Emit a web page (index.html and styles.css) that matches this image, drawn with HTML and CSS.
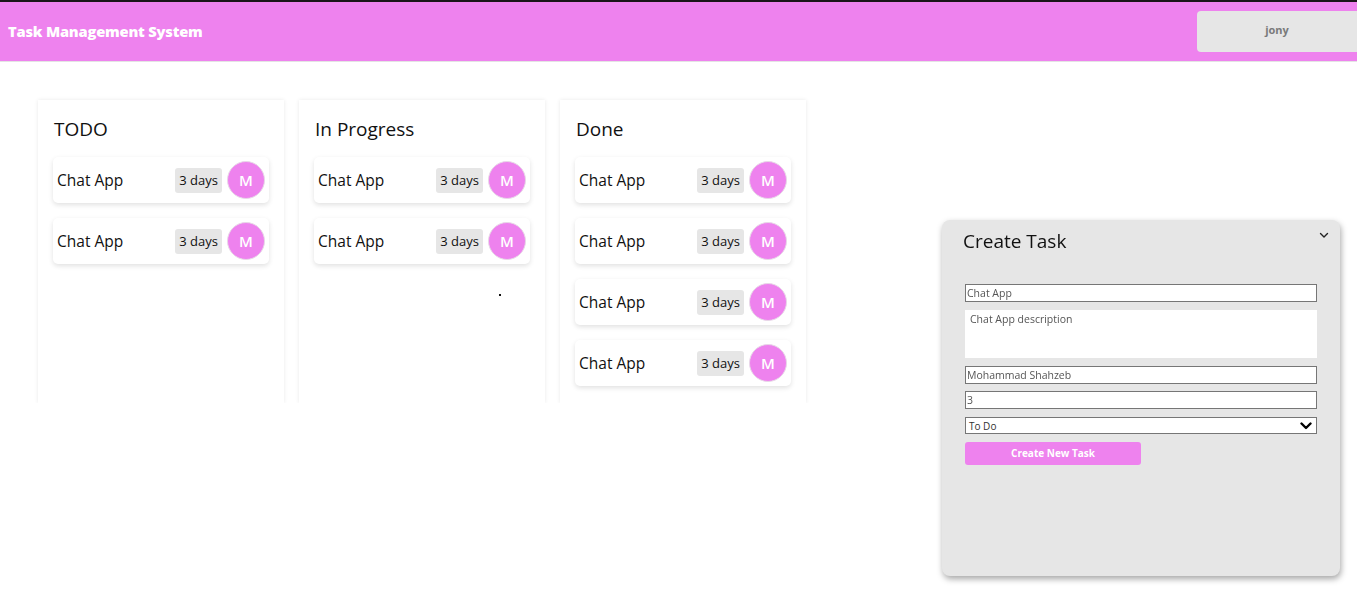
FILE: index.html
```html
<!DOCTYPE html>
<html>
<head>
<meta charset="utf-8">
<link rel="stylesheet" href="styles.css">
</head>
<body>
<header class="topbar">
  <h1 class="brand">Task Management System</h1>
  <div class="user">jony</div>
</header>
<main class="board">
  <section class="column">
    <h2 class="column-title">TODO</h2>
    <div class="card"><span class="card-name">Chat App</span><span class="days">3 days</span><span class="avatar">M</span></div>
    <div class="card"><span class="card-name">Chat App</span><span class="days">3 days</span><span class="avatar">M</span></div>
  </section>
  <section class="column">
    <h2 class="column-title">In Progress</h2>
    <div class="card"><span class="card-name">Chat App</span><span class="days">3 days</span><span class="avatar">M</span></div>
    <div class="card"><span class="card-name">Chat App</span><span class="days">3 days</span><span class="avatar">M</span></div>
    <div class="stray-dot"></div>
  </section>
  <section class="column">
    <h2 class="column-title">Done</h2>
    <div class="card"><span class="card-name">Chat App</span><span class="days">3 days</span><span class="avatar">M</span></div>
    <div class="card"><span class="card-name">Chat App</span><span class="days">3 days</span><span class="avatar">M</span></div>
    <div class="card"><span class="card-name">Chat App</span><span class="days">3 days</span><span class="avatar">M</span></div>
    <div class="card"><span class="card-name">Chat App</span><span class="days">3 days</span><span class="avatar">M</span></div>
  </section>
</main>
<aside class="create-panel">
  <div class="panel-head">
    <h2 class="panel-title">Create Task</h2>
    <svg class="chevron" width="10" height="7" viewBox="0 0 10 7"><path d="M1.5 1.5 L5 5 L8.5 1.5" fill="none" stroke="#222" stroke-width="1.4" stroke-linecap="round" stroke-linejoin="round"/></svg>
  </div>
  <form class="task-form">
    <input class="field" type="text" value="Chat App">
    <textarea class="field area">Chat App description</textarea>
    <input class="field tight" type="text" value="Mohammad Shahzeb">
    <input class="field" type="text" value="3">
    <div class="select-wrap">
      <span class="select-text">To Do</span>
      <svg class="select-caret" width="12" height="8" viewBox="0 0 12 8"><path d="M1.5 1.5 L6 6 L10.5 1.5" fill="none" stroke="#000" stroke-width="2.4" stroke-linecap="round" stroke-linejoin="round"/></svg>
    </div>
    <button class="create-btn" type="button">Create New Task</button>
  </form>
</aside>
</body>
</html>
```

FILE: styles.css
```css
* { box-sizing: border-box; }
body {
  margin: 0;
  font-family: "Open Sans", "DejaVu Sans", sans-serif;
  background: #fff;
  color: #111;
}
.topbar {
  height: 62px;
  background: #ee82ee;
  border-top: 2px solid #1b1419;
  border-bottom: 1px solid #e4e4e4;
  display: flex;
  align-items: center;
  justify-content: space-between;
  padding-left: 8px;
}
.brand {
  margin: 0 0 2px 0;
  color: #fff;
  font-size: 14.7px;
  font-weight: 800;
  letter-spacing: -0.2px;
}
.user {
  width: 160px;
  height: 41px;
  margin-bottom: 1px;
  background: #e6e6e6;
  border-radius: 4px 0 0 4px;
  display: flex;
  align-items: center;
  justify-content: center;
  color: #7a7a7a;
  font-size: 11px;
  font-weight: 700;
  padding-bottom: 3px;
}
.board {
  display: flex;
  gap: 15px;
  padding: 38px 0 0 38px;
  align-items: stretch;
}
.column {
  width: 246px;
  min-height: 303px;
  padding: 15px;
  background: #fff;
  box-shadow: 0 0 4px rgba(0,0,0,0.09);
  display: flex;
  flex-direction: column;
  gap: 15px;
}
.column-title {
  margin: 0;
  padding: 1px 0 0 1px;
  height: 27px;
  font-size: 19px;
  font-weight: 400;
  line-height: 27px;
}
.card {
  height: 46px;
  background: #fff;
  border-radius: 5px;
  box-shadow: 0 2px 5px rgba(0,0,0,0.12);
  display: flex;
  align-items: center;
  padding: 0 4px 0 4px;
}
.card-name {
  flex: 1;
  font-size: 15.5px;
}
.days {
  background: #e6e6e6;
  border-radius: 3px;
  height: 25px;
  width: 47px;
  display: flex;
  align-items: center;
  justify-content: center;
  font-size: 13px;
  margin-right: 5px;
}
.avatar {
  width: 38px;
  height: 38px;
  border-radius: 50%;
  background: #ee82ee;
  border: 1px solid #e8d8e8;
  color: #fff;
  font-size: 15px;
  font-weight: 600;
  display: flex;
  align-items: center;
  justify-content: center;
}
.stray-dot {
  width: 2px;
  height: 2px;
  background: #111;
  margin: 15px 0 0 185px;
}
.create-panel {
  position: fixed;
  right: 17px;
  bottom: 20px;
  width: 398px;
  height: 356px;
  background: #e6e6e6;
  border-radius: 8px;
  box-shadow: 1px 3px 6px rgba(0,0,0,0.35);
  padding: 8px 23px 0 23px;
}
.panel-head {
  display: flex;
  justify-content: space-between;
  align-items: flex-start;
}
.panel-title {
  margin: 0 0 0 -2px;
  font-size: 19px;
  font-weight: 400;
  line-height: 26px;
}
.chevron {
  margin: 4px -12px 0 0;
}
.task-form {
  margin-top: 30px;
  display: flex;
  flex-direction: column;
  align-items: flex-start;
}
.field {
  width: 352px;
  height: 18px;
  border: 1px solid #767676;
  background: #fff;
  padding: 0 1px;
  font-family: "Open Sans", "DejaVu Sans", sans-serif;
  font-size: 10.5px;
  color: #555;
  margin: 0 0 8px 0;
  outline: none;
}
.tight { margin-bottom: 7px; }
.area {
  height: 48px;
  border: none;
  padding: 2px 5px;
  resize: none;
  margin-bottom: 8px;
}
.select-wrap {
  width: 352px;
  height: 17px;
  border: 1px solid #767676;
  background: #fff;
  display: flex;
  align-items: center;
  justify-content: space-between;
  padding: 0 4px 0 3px;
}
.select-text {
  font-size: 10px;
  color: #333;
}
.create-btn {
  margin-top: 8px;
  width: 176px;
  height: 23px;
  border: none;
  border-radius: 3px;
  background: #ee82ee;
  color: #fff;
  font-family: "Open Sans", "DejaVu Sans", sans-serif;
  font-size: 10px;
  font-weight: 700;
  padding-bottom: 2px;
}
```
